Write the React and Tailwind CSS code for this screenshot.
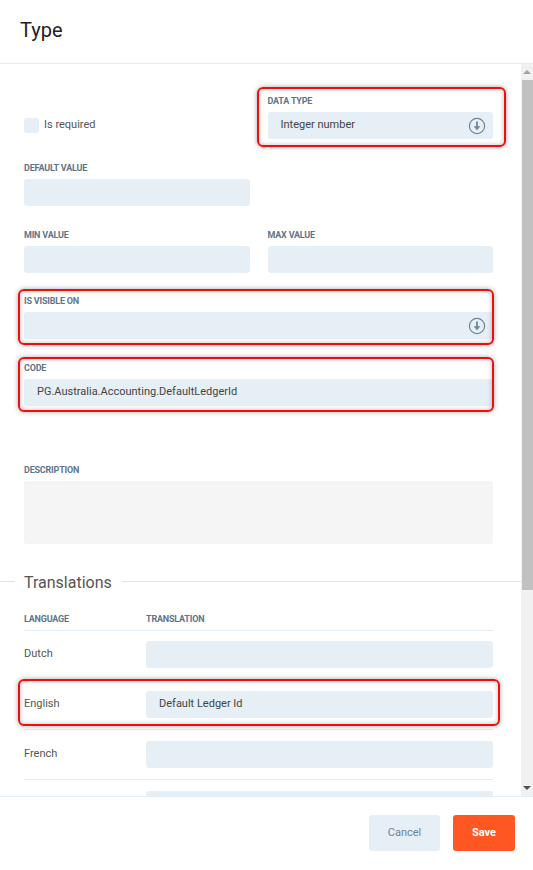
import React from 'react';

const labelCls = 'text-[9px] leading-[11px] font-bold uppercase tracking-[-0.2px] text-[#5f7489]';

function ArrowIcon() {
    return (
        <svg width="18" height="18" viewBox="0 0 18 18" className="shrink-0">
            <circle cx="9" cy="9" r="7.6" fill="none" stroke="#71849a" strokeWidth="1.2" />
            <line x1="9" y1="4.6" x2="9" y2="10" stroke="#71849a" strokeWidth="1.8" />
            <polygon points="5.6,9.2 12.4,9.2 9,13.2" fill="#71849a" />
        </svg>
    );
}

function Highlight({ className }) {
    return (
        <div
            className={`pointer-events-none absolute rounded-[6px] border-2 border-[#f20d0d] shadow-[0_0_5px_rgba(0,0,0,0.35),inset_0_0_5px_rgba(0,0,0,0.25)] ${className}`}
        />
    );
}

function Input({ value, select, className = '' }) {
    return (
        <div className={`h-[27px] bg-[#e6eef6] rounded-[3px] flex items-center pl-[13px] text-[11px] text-[#444] ${select ? 'pr-[7px]' : 'pr-[13px]'} ${className}`}>
            <span className="flex-1 truncate">{value}</span>
            {select && <ArrowIcon />}
        </div>
    );
}

function Field({ label, children, className = '' }) {
    return (
        <div className={`relative ${className}`}>
            <div className={`${labelCls} mb-[5px] pt-px`}>{label}</div>
            {children}
        </div>
    );
}

const languages = [
    { name: 'Dutch', value: '' },
    { name: 'English', value: 'Default Ledger Id', marked: true },
    { name: 'French', value: '' },
    { name: '', value: '' }
];

export default function App() {
    return (
        <div className="w-[533px] h-[870px] bg-white flex flex-col overflow-hidden font-['Roboto',sans-serif]">
            {/* Header */}
            <div className="h-[64px] shrink-0 border-b border-[#e3ebf3] px-5 pt-[18px]">
                <h1 className="text-[20px] leading-[24px] text-[#212121]">Type</h1>
            </div>

            {/* Body */}
            <div className="h-[732px] shrink-0 flex">
                <div className="flex-1 overflow-hidden">
                    <div className="pl-6 pr-[28px] pt-[31px]">
                        <div className="grid grid-cols-2 gap-x-[18px]">
                            <div className="flex items-end">
                                <div className="h-[27px] flex items-center gap-[5px]">
                                    <div className="w-[15px] h-[15px] rounded-[3px] bg-[#e6eef6]" />
                                    <span className="text-[11px] text-[#555]">Is required</span>
                                </div>
                            </div>
                            <Field label="Data type">
                                <Input value="Integer number" select />
                                <Highlight className="left-[-11px] right-[-13px] top-[-8px] bottom-[-8px]" />
                            </Field>
                        </div>

                        <div className="grid grid-cols-2 gap-x-[18px] mt-[23px]">
                            <Field label="Default value">
                                <Input />
                            </Field>
                        </div>

                        <div className="grid grid-cols-2 gap-x-[18px] mt-[23px]">
                            <Field label="Min value">
                                <Input />
                            </Field>
                            <Field label="Max value">
                                <Input />
                            </Field>
                        </div>

                        <Field label="Is visible on" className="mt-[22px]">
                            <Input select />
                            <Highlight className="left-[-6px] right-[-1px] top-[-6px] bottom-[-6px]" />
                        </Field>

                        <Field label="Code" className="mt-[23px]">
                            <Input value="PG.Australia.Accounting.DefaultLedgerId" />
                            <Highlight className="left-[-6px] right-[-1px] top-[-5px] bottom-[-6px]" />
                        </Field>

                        <Field label="Description" className="mt-[58px]">
                            <div className="h-[63px] rounded-[3px] bg-[#f5f5f5]" />
                        </Field>
                    </div>

                    {/* Translations */}
                    <div className="flex items-center mt-[28px] h-[22px]">
                        <div className="w-[15px] h-px bg-[#dde6ee] mt-[-3px]" />
                        <span className="ml-[9px] mr-[10px] text-[16px] leading-[22px] text-[#555]">Translations</span>
                        <div className="flex-1 h-px bg-[#dde6ee] mt-[-3px]" />
                    </div>

                    <div className="pl-6 pr-[28px] mt-[19px]">
                        <div className={`flex pt-px pb-[5px] border-b border-[#e3ebf3] ${labelCls}`}>
                            <div className="w-[122px]">Language</div>
                            <div>Translation</div>
                        </div>
                        {languages.map((lang, i) => (
                            <div
                                key={i}
                                className={`relative flex items-center pb-[11px] border-b border-[#e3ebf3] ${i === 0 ? 'pt-[10px]' : 'pt-[11px]'}`}
                            >
                                <div className="w-[122px] text-[11px] text-[#555]">{lang.name}</div>
                                <Input value={lang.value} className="flex-1" />
                                {lang.marked && (
                                    <Highlight className="left-[-6px] right-[-7px] top-[-1px] bottom-[3px]" />
                                )}
                            </div>
                        ))}
                    </div>
                </div>

                {/* Scrollbar */}
                <div className="w-[12px] bg-[#f1f1f1] flex flex-col">
                    <div className="h-[16px] flex items-center justify-center">
                        <div className="w-0 h-0 border-x-[4px] border-x-transparent border-b-[4px] border-b-[#a3a3a3]" />
                    </div>
                    <div className="h-[510px] ml-[1px] bg-[#c1c1c1]" />
                    <div className="flex-1" />
                    <div className="h-[16px] flex items-center justify-center">
                        <div className="w-0 h-0 border-x-[4px] border-x-transparent border-t-[4px] border-t-[#505050]" />
                    </div>
                </div>
            </div>

            {/* Footer */}
            <div className="flex-1 border-t border-[#e3ebf3] flex justify-end items-start gap-[13px] pt-[18px] pr-[18px]">
                <button className="w-[71px] h-[36px] rounded-[3px] bg-[#e6eef6] text-[11px] text-[#6f8196]">Cancel</button>
                <button className="w-[62px] h-[36px] rounded-[3px] bg-[#ff5722] text-[11px] font-bold text-white">Save</button>
            </div>
        </div>
    );
}
